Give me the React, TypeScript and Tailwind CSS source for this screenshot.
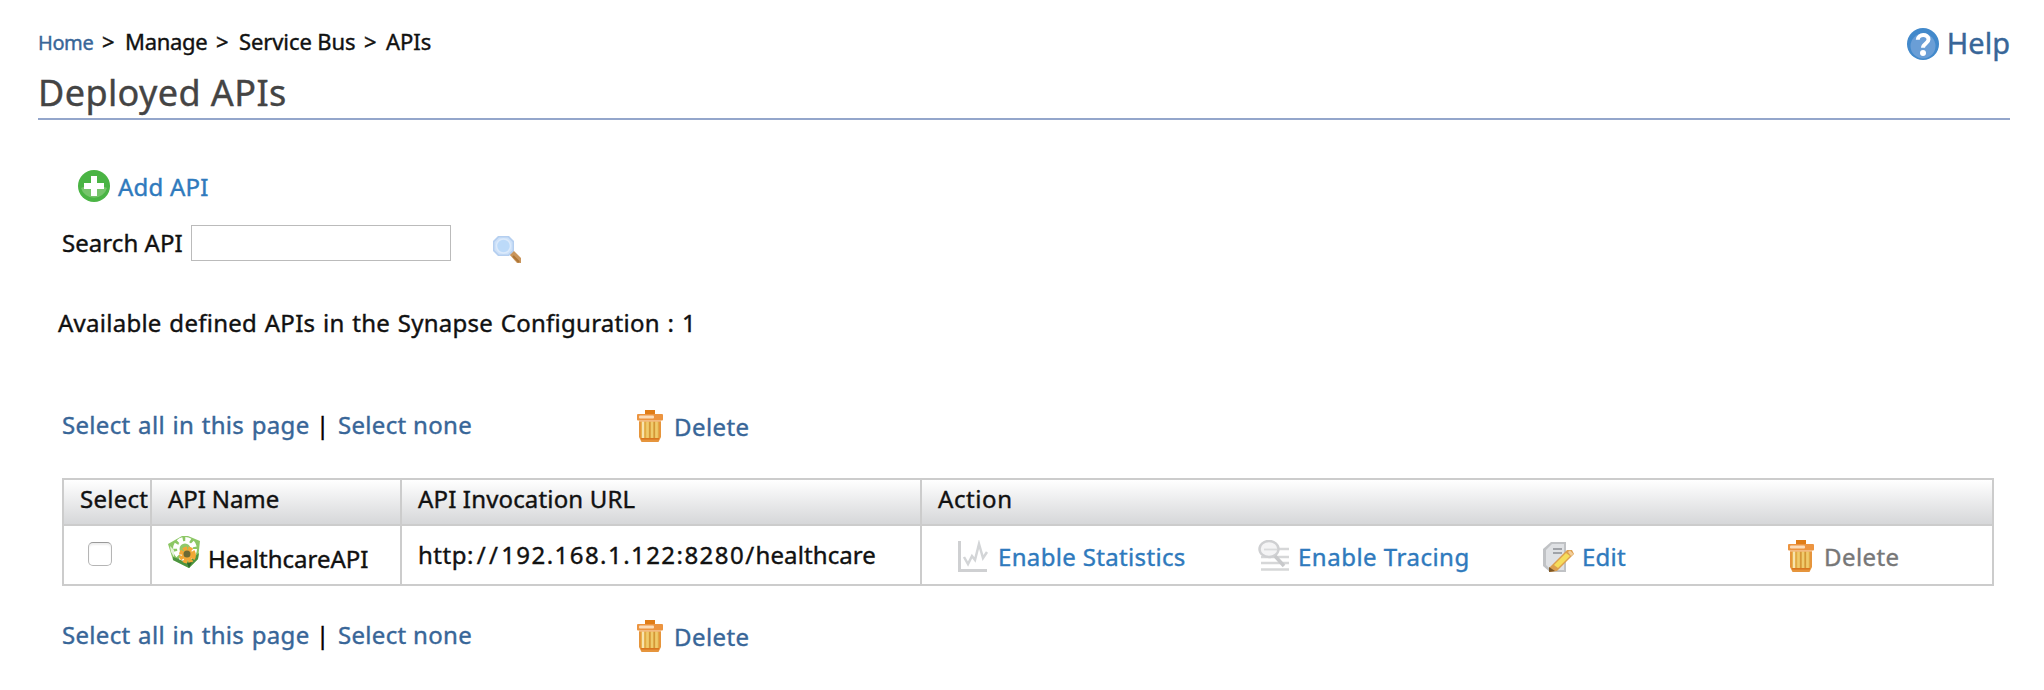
import React from "react";

type IconProps = { children: React.ReactNode; className?: string };
const Icon = ({ children, className = "" }: IconProps) => (
  <svg viewBox="0 0 32 32" className={`size-8 shrink-0 ${className}`}>{children}</svg>
);

const TrashIcon = ({ className = "" }: { className?: string }) => (
  <Icon className={className}>
    <rect x="11" y="0" width="10" height="5" fill="#e07d18" />
    <rect x="3" y="4" width="26" height="6.5" rx="1" fill="#ec9440" />
    <rect x="5" y="5.5" width="15" height="3" rx="1" fill="#fbdcb8" />
    <path d="M5 10.500H27V27L24.500 32H7.500L5 27Z" fill="#e6953c" />
    <path d="M7 11.500H25V28H7Z" fill="#e2a945" />
    <path d="M9 11.500V28M13.500 11.500V28M18 11.500V28M22.500 11.500V28" stroke="#efcb6c" strokeWidth="2.600" />
    <path d="M9 11.500V28" stroke="#f8e3ae" strokeWidth="2" />
    <path d="M15.800 11.500V28M20.300 11.500V28" stroke="#d29536" strokeWidth="1.200" />
    <path d="M7 28.800H25" stroke="#d8741e" strokeWidth="1.500" />
    <path d="M5 11H27" stroke="#f7c18b" strokeWidth="1.200" />
  </Icon>
);

const AddIcon = () => (
  <Icon>
    <circle cx="16" cy="16" r="16" fill="#4ab444" />
    <path d="M3 18C8 15 24 15 29 18A13.500 13.500 0 0 1 3 18Z" fill="#76c46b" />
    <path d="M13 6H19V13H26V19H19V26H13V19H6V13H13Z" fill="#fff" />
  </Icon>
);

const HelpIcon = () => (
  <Icon>
    <circle cx="16" cy="16" r="16" fill="#4289cb" />
    <circle cx="16" cy="18" r="12.500" fill="#6a9ed6" />
    <path d="M10.800 11.800C11 5.500 21.500 5.600 21.500 11.500C21.500 15.500 16 15.500 16 19.800" fill="none" stroke="#fff" strokeWidth="4" />
    <circle cx="16" cy="25" r="3" fill="#fff" />
  </Icon>
);

const SearchIcon = () => (
  <svg viewBox="0 0 28 28" className="mt-[10px] h-7 w-7 shrink-0">
    <path d="M16 19L20 15L28 23V28H24Z" fill="#c9955c" />
    <path d="M20 21L26 27" stroke="#ad7434" strokeWidth="2" />
    <path d="M5 1H16L21 6V16L16 21H5L0 16V6Z" fill="#b5cff0" />
    <path d="M6 2.500H15L19.500 7V15L15 19.500H6L1.500 15V7Z" fill="#cde1f8" />
    <circle cx="10.500" cy="11" r="7" fill="#bcdaf9" stroke="#dceafb" strokeWidth="1.500" />
  </svg>
);

const ApiIcon = () => (
  <Icon>
    <path d="M0 8L14 0H20L32 5L30 23L21 32L5 24Z" fill="#8cc765" />
    <path d="M5 21L20 26L31 17L30 23L21 32L5 24Z" fill="#4c9440" />
    <circle cx="17" cy="13" r="9.500" fill="none" stroke="#fff" strokeWidth="5" strokeDasharray="5 2.460" />
    <circle cx="17" cy="13" r="8" fill="#fff" />
    <circle cx="17" cy="13" r="5.500" fill="#8fc96a" />
    <path d="M2 10L6 14L6 21L3 16Z" fill="#e4f1da" />
    <circle cx="19.500" cy="19" r="6.500" fill="none" stroke="#f2a837" strokeWidth="4" strokeDasharray="4 1.100" />
    <circle cx="19.500" cy="19" r="5.500" fill="#f2a837" />
    <circle cx="19" cy="18" r="3.500" fill="#6d6a35" />
    <path d="M19 27L24 26L21 32Z" fill="#2f6b2c" />
  </Icon>
);

const StatisticsIcon = () => (
  <Icon>
    <path d="M1.500 1V30.500H29" fill="none" stroke="#cfd0d2" strokeWidth="3" />
    <path d="M6 17L10 24L14 16L17 20L21 4L25 18L29 12" fill="none" stroke="#d3d5d7" strokeWidth="2.500" />
  </Icon>
);

const TracingIcon = () => (
  <Icon>
    <path d="M5 9H31M3 17H31M3 23H31M3 29.500H31" stroke="#d6d7d8" strokeWidth="2.300" />
    <ellipse cx="11" cy="9" rx="9.500" ry="8" fill="#f4f4f5" stroke="#cfd0d2" strokeWidth="2.500" />
    <path d="M6 9.500H19" stroke="#dadbdc" strokeWidth="1.800" />
    <path d="M17 16L26 26" stroke="#c8c9cb" strokeWidth="3.500" />
  </Icon>
);

const EditIcon = () => (
  <Icon>
    <path d="M9 2H24V32H8L1 26V9Z" fill="#c0c2c5" />
    <path d="M10 4H22V30H9L4 25V10Z" fill="#dfe1e4" />
    <path d="M11 9H20M11 13H20" stroke="#a0a3a8" strokeWidth="2" />
    <path d="M7 28L25 10L30 10L32 14L15 31L8 32Z" fill="#dc9f4f" />
    <path d="M12 25L24 13L28 16L16 28Z" fill="#f5dd5c" />
    <path d="M26 12L28 10.500L31.500 14L29 16Z" fill="#f3cf9b" />
    <path d="M7 27L13 31L7 32Z" fill="#7d5726" />
  </Icon>
);

const SelectionBar = () => (
  <div className="flex h-[34px] text-[#386698]">
    <a className="w-[254px] tracking-[0.32px] [word-spacing:1px]">Select all in this page</a>
    <span className="w-[22px] text-black">|</span>
    <a className="w-[296px] tracking-[0.32px]">Select none</a>
    <TrashIcon className="mt-[1px]" />
    <a className="ml-2 mt-[2px] tracking-[0.41px]">Delete</a>
  </div>
);

const columns = [
  { label: "Select", className: "border-r-2 tracking-[0.25px]" },
  { label: "API Name", className: "border-r-2 tracking-[-0.1px]" },
  { label: "API Invocation URL", className: "border-r-2 tracking-[0.16px]" },
  { label: "Action", className: "tracking-[0.6px]" },
];

export default function App() {
  return (
    <main className="h-[690px] w-[2044px] overflow-hidden bg-white pl-[38px] pr-[34px] font-['Noto_Sans',sans-serif] text-[24px] leading-[32px] whitespace-nowrap text-[#111] [-webkit-text-stroke:0.4px]">
      <header className="flex h-[120px] justify-between border-b-2 border-[#94a6cb]">
        <div className="pt-[26px]">
          <nav className="flex h-[30px] items-baseline text-[22px] leading-[30px]">
            <a className="w-[64px] text-[20px] tracking-[-0.4px] text-[#386698]">Home</a>
            <span className="w-[23px]">&gt;</span>
            <span className="w-[91px] tracking-[-0.3px]">Manage</span>
            <span className="w-[23px]">&gt;</span>
            <span className="w-[125px] tracking-[-0.1px]">Service Bus</span>
            <span className="w-[22px]">&gt;</span>
            <span>APIs</span>
          </nav>
          <h1 className="mt-[15px] text-[36px] leading-[44px] tracking-[0.4px] text-[#444]">Deployed APIs</h1>
        </div>
        <a className="flex gap-2 pt-[28px] text-[29px] text-[#386698]">
          <HelpIcon />
          <span className="mt-[-1px]">Help</span>
        </a>
      </header>

      <section className="pt-[50px] pl-6">
        <a className="ml-4 flex h-[33px] gap-2 text-[#2f7abd]">
          <AddIcon />
          <span className="pt-[1px] tracking-[0.2px]">Add API</span>
        </a>
        <div className="mt-[22px] flex h-[38px] items-start leading-[36px]">
          <label htmlFor="q" className="w-[129px] tracking-[0.05px]">Search API</label>
          <input id="q" className="h-9 w-[260px] border border-[#bbb]" />
          <span className="w-[42px]" />
          <SearchIcon />
        </div>
        <p className="mt-[44px] ml-[-4px] h-8 tracking-[0.26px] [word-spacing:1.2px]">Available defined APIs in the Synapse Configuration : 1</p>
        <div className="mt-[70px]"><SelectionBar /></div>

        <div className="mt-[35px] grid w-[1932px] grid-cols-[88px_250px_520px_1fr] border-2 border-[#ccc]">
          {columns.map((c) => (
            <div key={c.label} className={`h-[46px] border-b-2 border-[#ccc] bg-gradient-to-b from-white to-[#d6d7d9] pl-4 leading-[38px] ${c.className}`}>
              {c.label}
            </div>
          ))}
          <div className="h-[58px] border-r-2 border-[#ccc] pt-4 pl-6">
            <input type="checkbox" className="block size-6 appearance-none rounded-[5px] border-[1.5px] border-[#b5b5b5] border-t-[#999] bg-white shadow-[inset_0_2px_2px_#eee]" />
          </div>
          <div className="flex border-r-2 border-[#ccc] pt-[10px] pl-4">
            <ApiIcon />
            <span className="ml-2 pt-[7px]">HealthcareAPI</span>
          </div>
          <div className="border-r-2 border-[#ccc] pt-[13px] pl-4">
            <span className="tracking-[0.5px]">http</span>
            <span className="tracking-[3.3px]">://</span>
            <span className="tracking-[1.45px]">192.168.1.122:8280/</span>
            <span className="tracking-[0.1px]">healthcare</span>
          </div>
          <div className="flex pt-[14px] pl-9 text-[#2f7abd]">
            <a className="flex w-[300px] gap-2"><StatisticsIcon /><span className="pt-[1px] tracking-[0.34px]">Enable Statistics</span></a>
            <a className="flex w-[284px] gap-2"><TracingIcon /><span className="pt-[1px] tracking-[0.5px]">Enable Tracing</span></a>
            <a className="flex w-[243px] gap-2"><EditIcon /><span className="pt-[1px] tracking-[0.2px]">Edit</span></a>
            <a className="flex gap-[7px] text-[#777]"><TrashIcon /><span className="pt-[1px] tracking-[0.41px]">Delete</span></a>
          </div>
        </div>
        <div className="mt-[33px]"><SelectionBar /></div>
      </section>
    </main>
  );
}
